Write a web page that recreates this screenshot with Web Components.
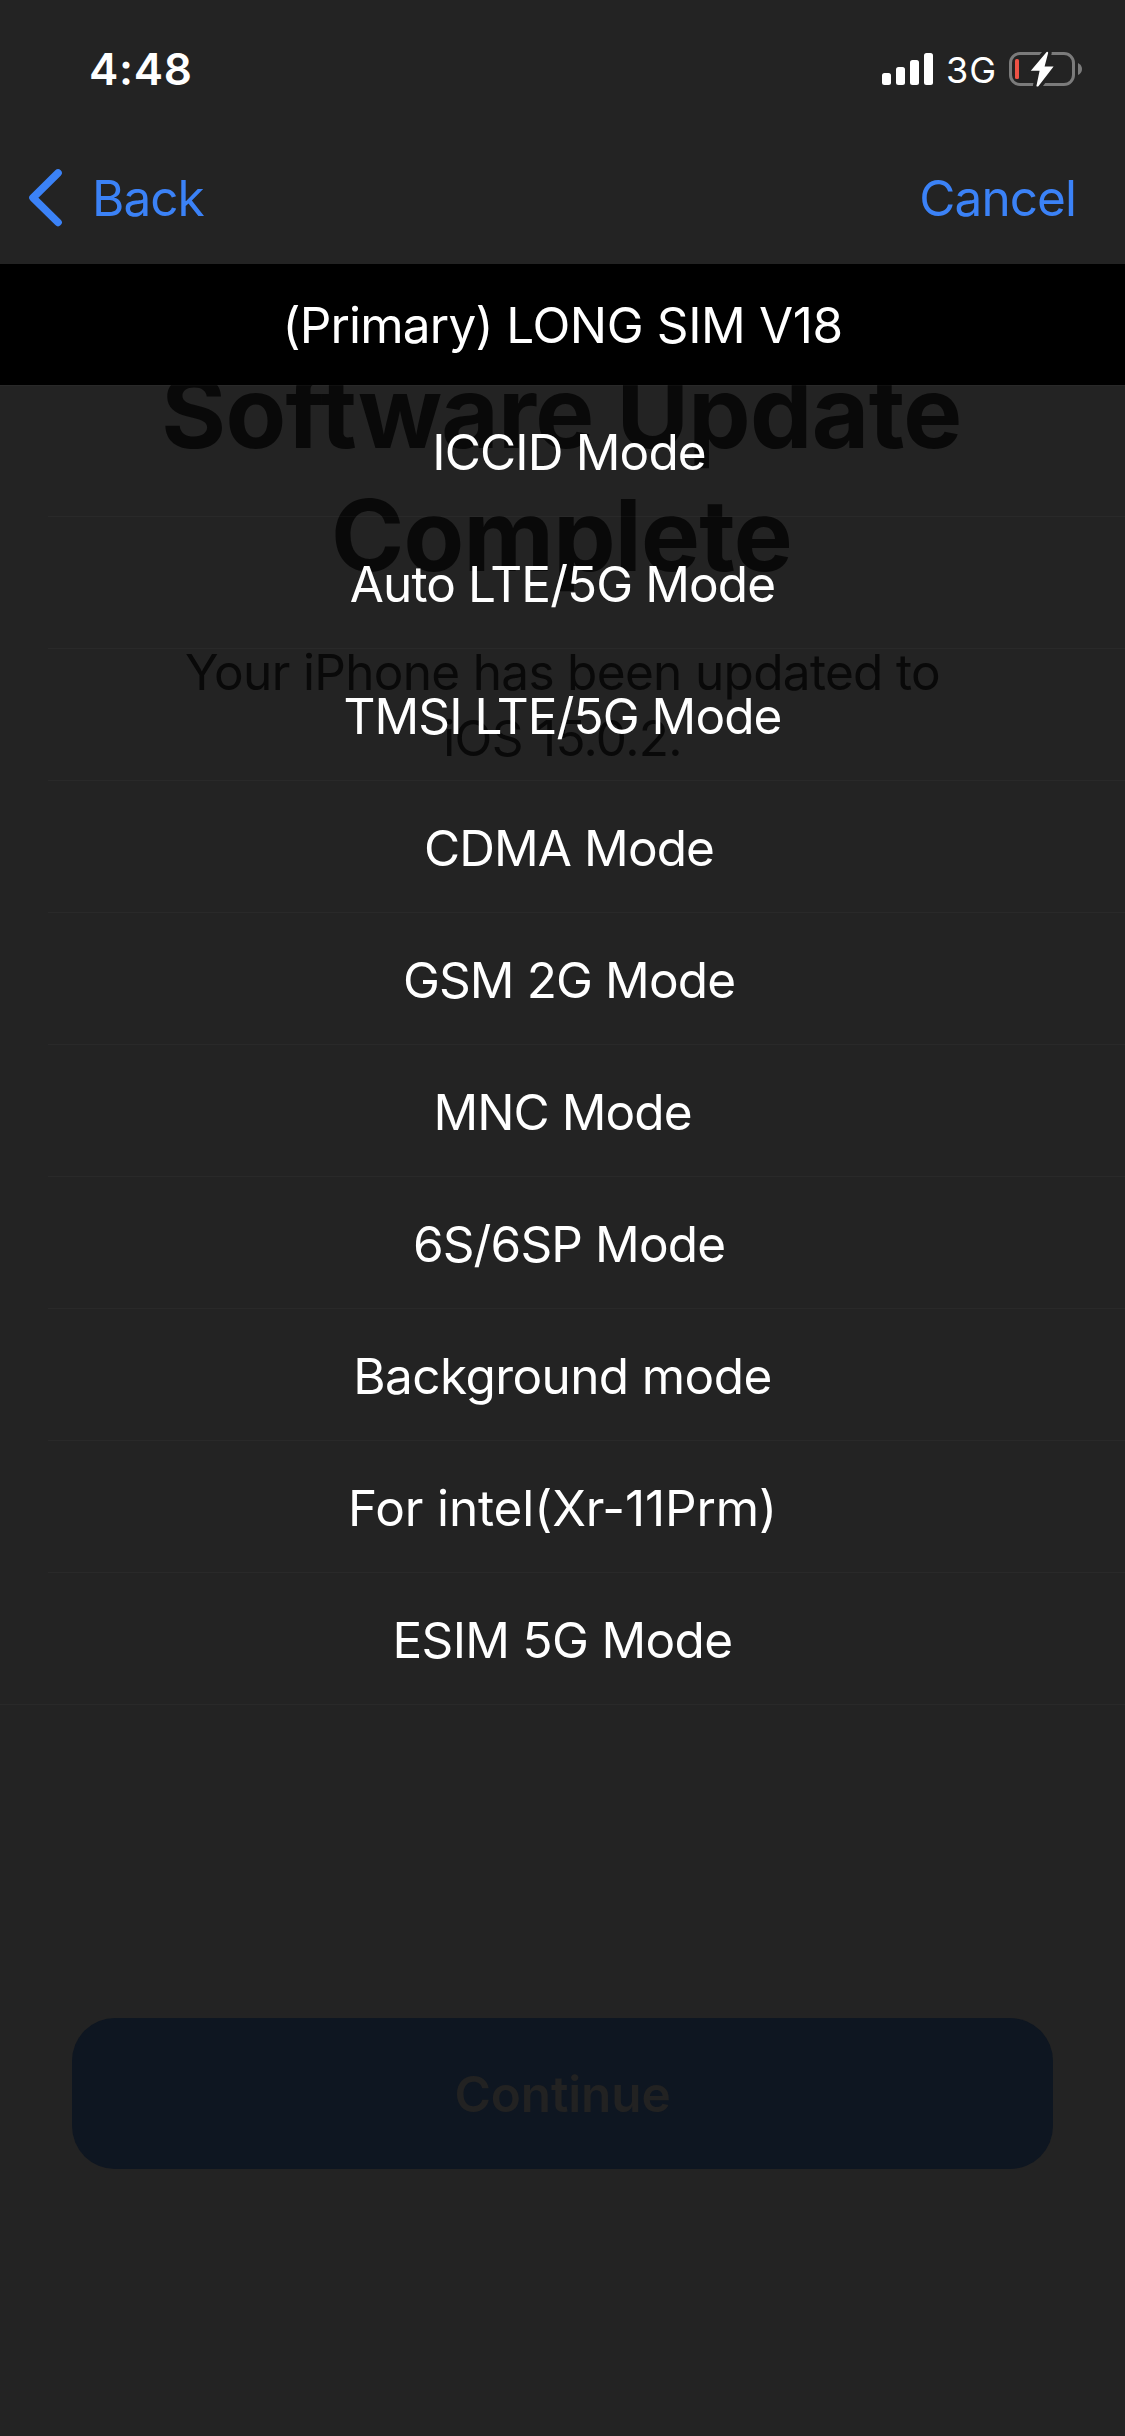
<!DOCTYPE html>
<html lang="en">
<head>
<meta charset="utf-8">
<title>SIM mode</title>
<style>
body {
    margin: 0;
    background: #232323;
    color: #fff;
    font-family: Inter, "Liberation Sans", sans-serif;
    font-size: 49.5px;
}
</style>
</head>
<body>
<phone-screen>
    <setup-page slot="back">
        <span slot="title"><span style="letter-spacing:-.64px">Software Update</span><br><span style="letter-spacing:-.74px">Complete</span></span>
        <span slot="text">Your iPhone has been updated to<br>iOS 15.0.2.</span>
        <span slot="button">Continue</span>
    </setup-page>
    <status-bar slot="front">
        <span slot="time">4:48</span>
        <span slot="network">3G</span>
    </status-bar>
    <nav-bar slot="front">
        <span slot="back">Back</span>
        <span slot="cancel">Cancel</span>
    </nav-bar>
    <sim-header slot="front"><span style="letter-spacing:-.8px">(Primary)</span> LONG SIM V18</sim-header>
    <mode-list slot="front">
        <mode-row style="letter-spacing:-.84px"> ICCID Mode</mode-row>
        <mode-row style="letter-spacing:-.92px">Auto LTE/5G Mode</mode-row>
        <mode-row style="letter-spacing:-.94px">TMSI LTE/5G Mode</mode-row>
        <mode-row style="letter-spacing:-.92px"> CDMA Mode</mode-row>
        <mode-row style="letter-spacing:-.88px"> GSM 2G Mode</mode-row>
        <mode-row style="letter-spacing:-.93px">MNC Mode</mode-row>
        <mode-row style="letter-spacing:-.87px"> 6S/6SP Mode</mode-row>
        <mode-row style="letter-spacing:-.6px">Background mode</mode-row>
        <mode-row style="letter-spacing:-.12px">For intel(Xr-11Prm)</mode-row>
        <mode-row last style="letter-spacing:-.67px">ESIM 5G Mode</mode-row>
    </mode-list>
</phone-screen>

<script>
// two layers in the same grid cell: the page below, the sheet above
class PhoneScreen extends HTMLElement {
constructor() {
    super();
    this.attachShadow({ mode: 'open' });
    this.shadowRoot.innerHTML = `
    <style>
    :host {
        display: grid;
        width: 1125px;
        height: 2436px;
        overflow: hidden;
    }
    .back, .front {
        grid-area: 1 / 1;
        display: flex;
        flex-direction: column;
        min-width: 0;
    }
    .front {
        z-index: 1;
    }
    </style>
    <div class="back"><slot name="back"></slot></div>
    <div class="front"><slot name="front"></slot></div>
    `;
}
}

class SetupPage extends HTMLElement {
constructor() {
    super();
    this.attachShadow({ mode: 'open' });
    this.shadowRoot.innerHTML = `
    <style>
    :host {
        flex: 1;
        display: flex;
        flex-direction: column;
        padding: 351px 72px 267px;
        color: #090909;
        text-align: center;
    }
    h1 {
        margin: 0 2px 0 0;
        font-size: 99px;
        font-weight: 700;
        line-height: 123px;
    }
    p {
        margin: 42px 0 0;
        line-height: 66px;
        letter-spacing: -.68px;
    }
    .button {
        margin-top: auto;
        height: 150px;
        padding-top: 1px;
        display: flex;
        align-items: center;
        justify-content: center;
        border-radius: 43px;
        background: #0e1621;
        color: #222;
        font-weight: 600;
        letter-spacing: -.13px;
    }
    </style>
    <h1><slot name="title"></slot></h1>
    <p><slot name="text"></slot></p>
    <div class="button"><slot name="button"></slot></div>
    `;
}
}

class StatusBar extends HTMLElement {
constructor() {
    super();
    this.attachShadow({ mode: 'open' });
    this.shadowRoot.innerHTML = `
    <style>
    :host {
        box-sizing: border-box;
        height: 132px;
        padding: 6px 43px 0 89px;
        display: flex;
        align-items: center;
        justify-content: space-between;
    }
    .time {
        font-size: 44px;
        font-weight: 600;
        letter-spacing: .69px;
    }
    .right {
        display: flex;
        align-items: center;
    }
    .network {
        padding-top: 1px;
        margin-left: 13px;
        width: 63px;
        font-size: 36px;
        letter-spacing: 1px;
    }
    svg {
        display: block;
    }
    </style>
    <div class="time"><slot name="time"></slot></div>
    <div class="right">
        <svg width="51" height="32" viewBox="0 0 51 32" fill="#fff">
            <rect x="0" y="20" width="9" height="12" rx="2.5"/>
            <rect x="14" y="14" width="9" height="18" rx="2.5"/>
            <rect x="28" y="7" width="9" height="25" rx="2.5"/>
            <rect x="42" y="0" width="9" height="32" rx="2.5"/>
        </svg>
        <div class="network"><slot name="network"></slot></div>
        <svg width="73" height="36" viewBox="0 0 73 36">
            <rect x="1.5" y="2.5" width="63" height="31" rx="9.5" fill="none" stroke="#7b7b7b" stroke-width="3"/>
            <path d="M69 12 Q73 14 73 18 Q73 22 69 24 Z" fill="#7b7b7b"/>
            <rect x="6" y="8" width="4" height="20" rx="1.5" fill="#ed5245"/>
            <path d="M37.6 1 L21.8 19.8 H30.6 L27.4 35 Q28.2 36 29.4 35.2 L44.6 15.4 H35.6 L39.2 1.8 Q38.6 .4 37.6 1 Z" fill="#fff" stroke="#232323" stroke-width="7" stroke-linejoin="round" paint-order="stroke"/>
        </svg>
    </div>
    `;
}
}

class NavBar extends HTMLElement {
constructor() {
    super();
    this.attachShadow({ mode: 'open' });
    this.shadowRoot.innerHTML = `
    <style>
    :host {
        box-sizing: border-box;
        height: 132px;
        padding: 0 49px 0 28px;
        display: flex;
        align-items: center;
        justify-content: space-between;
        color: #3b82f7;
        letter-spacing: -.95px;
    }
    .back {
        display: flex;
        align-items: center;
        gap: 28px;
    }
    svg {
        display: block;
    }
    </style>
    <div class="back">
        <svg width="36" height="60" viewBox="0 0 36 60" fill="none" stroke="#3b82f7" stroke-width="7.6" stroke-linecap="round" stroke-linejoin="round">
            <path d="M30 5 L5 29.7 L30 54.4"/>
        </svg>
        <slot name="back"></slot>
    </div>
    <slot name="cancel"></slot>
    `;
}
}

class SimHeader extends HTMLElement {
constructor() {
    super();
    this.attachShadow({ mode: 'open' });
    this.shadowRoot.innerHTML = `
    <style>
    :host {
        display: block;
        height: 121px;
        background: #000;
        line-height: 122px;
        text-align: center;
        letter-spacing: -.4px;
    }
    </style>
    <slot></slot>
    `;
}
}

class ModeList extends HTMLElement {
constructor() {
    super();
    this.attachShadow({ mode: 'open' });
    this.shadowRoot.innerHTML = `
    <style>
    :host {
        display: flex;
        flex-direction: column;
        box-shadow: inset 0 1px rgba(255, 255, 255, .03);
    }
    </style>
    <slot></slot>
    `;
}
}

class ModeRow extends HTMLElement {
constructor() {
    super();
    this.attachShadow({ mode: 'open' });
    this.shadowRoot.innerHTML = `
    <style>
    :host {
        display: grid;
        grid-template-rows: 131px 1px;
        white-space: pre;
        text-align: center;
    }
    .label {
        line-height: 134px;
    }
    .line {
        margin-left: 48px;
        background: rgba(255, 255, 255, .03);
    }
    :host([last]) .line {
        margin-left: 0;
    }
    </style>
    <div class="label"><slot></slot></div>
    <div class="line"></div>
    `;
}
}

customElements.define('phone-screen', PhoneScreen);
customElements.define('setup-page', SetupPage);
customElements.define('status-bar', StatusBar);
customElements.define('nav-bar', NavBar);
customElements.define('sim-header', SimHeader);
customElements.define('mode-list', ModeList);
customElements.define('mode-row', ModeRow);
</script>
</body>
</html>
